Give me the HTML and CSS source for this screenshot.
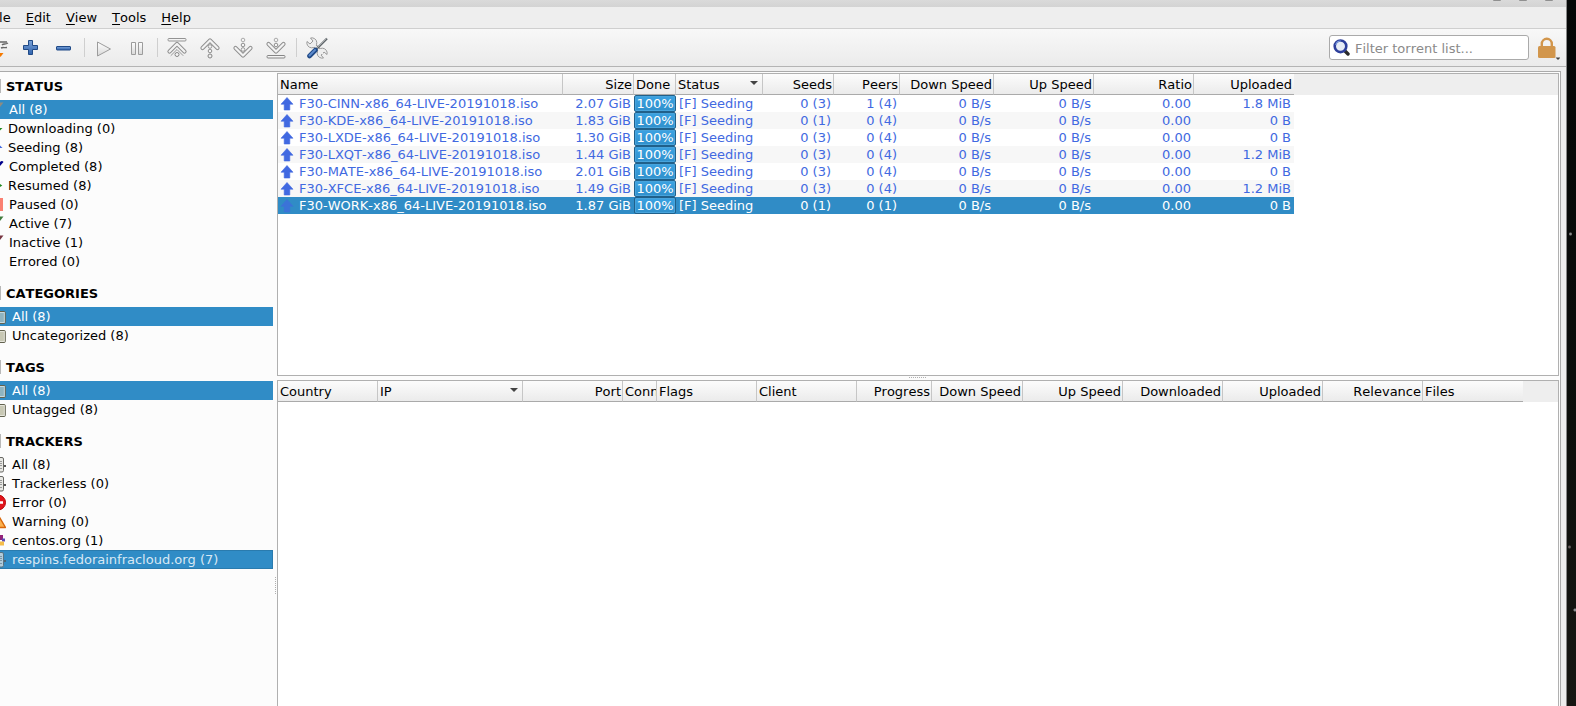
FILE: index.html
```html
<!DOCTYPE html>
<html lang="en">
<head>
    <meta charset="UTF-8">
    <meta name="viewport" content="width=device-width, initial-scale=1.0">
    <title>Torrents</title>
    <link rel="stylesheet" href="styles.css">
</head>
<body>
    <svg class="defs" width="0" height="0">
        <defs>
            <linearGradient id="blue" x1="0" y1="0" x2="0" y2="1">
                <stop offset="0" stop-color="#7ba3d8"/>
                <stop offset="1" stop-color="#2f62ad"/>
            </linearGradient>
            <linearGradient id="grey" x1="0" y1="0" x2="0" y2="1">
                <stop offset="0" stop-color="#ffffff"/>
                <stop offset="1" stop-color="#d8d8d8"/>
            </linearGradient>
            <symbol id="arrow-up" viewBox="0 0 14 14">
                <path d="M7 .5 13 7.2H9.8V13H4.2V7.2H1z" fill="#4169e1" stroke="#4169e1" stroke-width=".6" stroke-linejoin="round"/>
            </symbol>
            <symbol id="chevron" viewBox="0 0 22 14">
                <path d="M3.500 11 11 3.500 18.500 11" fill="none" stroke="#8f8f8f" stroke-width="4.200" stroke-linecap="round" stroke-linejoin="round"/>
                <path d="M3.500 11 11 3.500 18.500 11" fill="none" stroke="#f3f3f3" stroke-width="2.200" stroke-linecap="round" stroke-linejoin="round"/>
            </symbol>
            <symbol id="box" viewBox="0 0 16 16">
                <rect x="1" y="2.500" width="14.300" height="12" rx="1" fill="currentColor" stroke="#62624f"/>
                <rect x="2" y="3.500" width="12.300" height="10" fill="none" stroke="#fff" stroke-opacity=".5"/>
            </symbol>
            <symbol id="server" viewBox="0 0 16 16">
                <rect x="3.500" y=".5" width="10" height="14.500" rx="1.500" fill="#e8e8e4" stroke="#686864"/>
                <path d="M6 4.500h6M6 6.500h6M6 8.500h6M6 11.500h6" stroke="#999"/>
                <path d="M14 9h2" stroke="#555" stroke-width="2"/>
            </symbol>
        </defs>
    </svg>

    <div class="desktop">
        <div class="window">
            <div class="titlebar"><i></i><i></i><i></i></div>

            <div class="menubar">
                <span><u>F</u>ile</span>
                <span><u>E</u>dit</span>
                <span><u>V</u>iew</span>
                <span><u>T</u>ools</span>
                <span><u>H</u>elp</span>
            </div>

            <div class="toolbar">
                <span class="tool"><svg width="22" height="22" viewBox="0 0 22 22"><path d="M12 5h8M15 8c2-2 3 0 6-2M14 11c2-1 3 0 6-.500" fill="none" stroke="#666" stroke-width="1.400"/><path d="M11 16h5.500l-3 4z" fill="#f57900"/></svg></span>
                <span class="tool"><svg width="22" height="22" viewBox="0 0 22 22"><path d="M8.500 3.500h4v5h5v4h-5v5h-4v-5h-5v-4h5z" fill="url(#blue)" stroke="#204a87" stroke-linejoin="round"/></svg></span>
                <span class="tool"><svg width="22" height="22" viewBox="0 0 22 22"><rect x="3.500" y="9.500" width="14" height="3.500" rx=".5" fill="url(#blue)" stroke="#204a87"/></svg></span>
                <i class="sep"></i>
                <span class="tool"><svg width="22" height="22" viewBox="0 0 22 22"><path d="M4.500 5v14L17.500 12z" fill="url(#grey)" stroke="#9c9c9c" stroke-linejoin="round"/></svg></span>
                <span class="tool"><svg width="22" height="22" viewBox="0 0 22 22"><path d="M5.500 5.500h4v12h-4zM12.500 5.500h4v12h-4z" fill="url(#grey)" stroke="#9c9c9c"/></svg></span>
                <i class="sep"></i>
                <span class="tool"><svg width="22" height="22" viewBox="0 0 22 22"><rect x="2" y="1.500" width="18" height="2.500" rx="1" fill="#f4f4f4" stroke="#939393"/><use href="#chevron" x="0" y="3.500" width="22" height="14"/><path d="M5 18.500 11 12.500 17 18.500" fill="none" stroke="#999" stroke-linecap="round"/><circle cx="11" cy="17.500" r="2" fill="#f4f4f4" stroke="#858585"/></svg></span>
                <span class="tool"><svg width="22" height="22" viewBox="0 0 22 22"><use href="#chevron" x="0" y="0" width="22" height="14"/><circle cx="11" cy="9.500" r="1.800" fill="#f4f4f4" stroke="#999"/><circle cx="11" cy="14" r="1.800" fill="#f4f4f4" stroke="#8f8f8f"/><circle cx="11" cy="19" r="2" fill="#eee" stroke="#858585"/></svg></span>
                <span class="tool"><svg width="22" height="22" viewBox="0 0 22 22"><g transform="matrix(1 0 0 -1 0 22)"><use href="#chevron" x="0" y="0" width="22" height="14"/><circle cx="11" cy="9.500" r="1.800" fill="#f4f4f4" stroke="#999"/><circle cx="11" cy="14" r="1.800" fill="#f4f4f4" stroke="#8f8f8f"/><circle cx="11" cy="19" r="1.800" fill="#f4f4f4" stroke="#aaa"/></g></svg></span>
                <span class="tool"><svg width="22" height="22" viewBox="0 0 22 22"><g transform="matrix(1 0 0 -1 0 22)"><rect x="2" y="1" width="18" height="2.500" rx="1" fill="#f4f4f4" stroke="#858585"/><use href="#chevron" x="0" y="4" width="22" height="14"/><circle cx="11" cy="14" r="1.800" fill="#f4f4f4" stroke="#8f8f8f"/><circle cx="11" cy="19" r="1.800" fill="#f4f4f4" stroke="#aaa"/></g></svg></span>
                <i class="sep wide"></i>
                <span class="tool"><svg width="22" height="22" viewBox="0 0 22 22">
                    <path d="M6 6 17 17" stroke="#888" stroke-width="4"/>
                    <path d="M1 4.500 4 7 7 4 4.500 1A5 5 0 1 1 1 4.500zM21 17.500 18 15 15 18 17.500 21A5 5 0 1 1 21 17.500z" fill="#eee" stroke="#999"/>
                    <path d="M6 6 17 17" stroke="#eee" stroke-width="2.200"/>
                    <path d="M21 1.500 11 11.500" stroke="#5e6468" stroke-width="2.200"/>
                    <path d="M20.500 1.500 11 11" stroke="#b5b9bb" stroke-width=".8"/>
                    <path d="M9.500 13 3.500 19" stroke="#204a87" stroke-width="4.600" stroke-linecap="round"/>
                    <path d="M9 13 3.500 18.500" stroke="#5c8acb" stroke-width="2" stroke-linecap="round"/>
                </svg></span>
                <div class="search">
                    <svg width="17" height="17" viewBox="0 0 17 17"><path d="M12 12 15 15" stroke="#2a2a2a" stroke-width="3.400" stroke-linecap="round"/><circle cx="7.500" cy="7.300" r="5.800" fill="#e6ecf6" stroke="#2d3f9b" stroke-width="2.600"/><path d="M2.800 6a5 5 0 0 1 5-4" fill="none" stroke="#7d9de0" stroke-width="1.200"/></svg>
                    <span>Filter torrent list...</span>
                </div>
                <svg class="lock" width="24" height="24" viewBox="0 0 24 24"><path d="M5.800 11V7.800a5 5 0 0 1 10 0V11" fill="none" stroke="#d2964c" stroke-width="2.400"/><rect x="2" y="10" width="17.500" height="12" rx="1.500" fill="#d2964c"/><path d="M19.500 21.500h5l-2.500 2.500z" fill="#444"/></svg>
            </div>

            <div class="main">
                <div class="sidebar">
                    <h3>STATUS</h3>
                    <ul class="status">
                        <li class="selected"><svg viewBox="0 0 9 19"><path d="M0 2.500h3.500L0 7z" fill="#8e8b80"/></svg>All (8)</li>
                        <li class="near"><svg viewBox="0 0 8 19"><path d="M0 9h2.500L0 11.500z" fill="#228b22"/></svg>Downloading (0)</li>
                        <li class="near"><svg viewBox="0 0 8 19"><path d="M0 7.500 2.500 10H0z" fill="#4169e1"/></svg>Seeding (8)</li>
                        <li><svg viewBox="0 0 9 19"><path d="M0 5q2-2 3.500 0L0 9z" fill="#00008b"/></svg>Completed (8)</li>
                        <li class="near"><svg viewBox="0 0 8 19"><path d="M0 8 2.300 9.500 0 11z" fill="#228b22"/></svg>Resumed (8)</li>
                        <li><svg viewBox="0 0 9 19"><path d="M0 3h3v13H0z" fill="#fa8072"/></svg>Paused (0)</li>
                        <li><svg viewBox="0 0 9 19"><path d="M0 2.500h3.500L0 7z" fill="#3f7a3c"/></svg>Active (7)</li>
                        <li><svg viewBox="0 0 9 19"><path d="M0 2.500h3.500L0 7z" fill="#773440"/></svg>Inactive (1)</li>
                        <li><svg viewBox="0 0 9 19"></svg>Errored (0)</li>
                    </ul>
                    <h3>CATEGORIES</h3>
                    <ul>
                        <li class="selected"><svg class="box-blue"><use href="#box"/></svg>All (8)</li>
                        <li><svg class="box-tan"><use href="#box"/></svg>Uncategorized (8)</li>
                    </ul>
                    <h3>TAGS</h3>
                    <ul>
                        <li class="selected"><svg class="box-blue"><use href="#box"/></svg>All (8)</li>
                        <li><svg class="box-tan"><use href="#box"/></svg>Untagged (8)</li>
                    </ul>
                    <h3>TRACKERS</h3>
                    <ul>
                        <li><svg><use href="#server"/></svg>All (8)</li>
                        <li><svg><use href="#server"/></svg>Trackerless (0)</li>
                        <li><svg viewBox="0 0 16 16"><circle cx="8" cy="7.500" r="7.500" fill="#e0151c" stroke="#b00"/><path d="M4 7.500h9" stroke="#fff" stroke-width="2.500"/></svg>Error (0)</li>
                        <li><svg viewBox="0 0 16 16"><path d="M8.500 1.500 15.500 13.500H1.500z" fill="#fbb04e" stroke="#d8660b" stroke-width="1.400" stroke-linejoin="round"/></svg>Warning (0)</li>
                        <li><svg viewBox="0 0 16 16"><path d="M8 2h5v5H8z" fill="#932279"/><path d="M12 5.500h3v3H12z" fill="#5b4bb5"/><path d="M9 8.500h5v4H9z" fill="#f5bd4a"/></svg>centos.org (1)</li>
                        <li class="selected focused"><svg><use href="#server"/></svg>respins.fedorainfracloud.org (7)</li>
                    </ul>
                    <i class="grip"></i>
                </div>

                <div class="panes">
                    <div class="pane torrents">
                        <div class="header">
                            <b>Name</b><b class="num">Size</b><b>Done</b><b class="sorted">Status</b><b class="num">Seeds</b><b class="num">Peers</b><b class="num">Down Speed</b><b class="num">Up Speed</b><b class="num">Ratio</b><b class="num">Uploaded</b>
                        </div>
                        <div id="torrent-rows"></div>
                    </div>
                    <div class="splitter"><i></i></div>
                    <div class="pane peers">
                        <div class="header">
                            <b>Country</b><b class="sorted">IP</b><b class="num">Port</b><b>Conn</b><b>Flags</b><b>Client</b><b class="num">Progress</b><b class="num">Down Speed</b><b class="num">Up Speed</b><b class="num">Downloaded</b><b class="num">Uploaded</b><b class="num">Relevance</b><b>Files</b>
                        </div>
                    </div>
                </div>
            </div>
        </div>
    </div>

    <script>
        // name, size, seeds, peers, uploaded
        const torrents = [
            ['CINN', '2.07 GiB', '0 (3)', '1 (4)', '1.8 MiB'],
            ['KDE', '1.83 GiB', '0 (1)', '0 (4)', '0 B'],
            ['LXDE', '1.30 GiB', '0 (3)', '0 (4)', '0 B'],
            ['LXQT', '1.44 GiB', '0 (3)', '0 (4)', '1.2 MiB'],
            ['MATE', '2.01 GiB', '0 (3)', '0 (4)', '0 B'],
            ['XFCE', '1.49 GiB', '0 (3)', '0 (4)', '1.2 MiB'],
            ['WORK', '1.87 GiB', '0 (1)', '0 (1)', '0 B']
        ];

        // Fill the torrent list, last row is the selected one
        document.getElementById('torrent-rows').innerHTML = torrents.map(([name, size, seeds, peers, uploaded], i) => `
            <div class="row${i === torrents.length - 1 ? ' selected' : ''}">
                <span class="name"><svg width="14" height="14"><use href="#arrow-up"/></svg>F30-${name}-x86_64-LIVE-20191018.iso</span>
                <span class="num">${size}</span>
                <span class="progress">100%</span>
                <span>[F] Seeding</span>
                <span class="num">${seeds}</span>
                <span class="num">${peers}</span>
                <span class="num">0 B/s</span>
                <span class="num">0 B/s</span>
                <span class="num">0.00</span>
                <span class="num">${uploaded}</span>
            </div>`).join('');
    </script>
</body>
</html>
```
FILE: styles.css
```css
* {
    box-sizing: border-box;
}
body {
    margin: 0;
    font-family: "DejaVu Sans", sans-serif;
    font-size: 13px;
    font-kerning: none;
    color: #000;
    overflow: hidden;
}
.defs {
    display: block;
}
.desktop {
    height: 706px;
    padding-right: 9px;
    background: radial-gradient(circle at 1570.5px 234px, #999 0, #777 1px, transparent 2px),
        radial-gradient(circle at 1569.5px 547px, #866 0, #555 1px, transparent 2px),
        radial-gradient(circle at 1575px 610px, #99a 0, #888 1px, transparent 2px), linear-gradient(#040606, #0c0e0b 60%, #171713);
}
.window {
    height: 706px;
    display: flex;
    flex-direction: column;
    background: #eee;
    border-right: 1px solid #888;
}
.titlebar {
    height: 7px;
    flex: none;
    display: flex;
    justify-content: flex-end;
    gap: 18px;
    padding-right: 13px;
    background: linear-gradient(#dadada, #d3d3d3);
}
.titlebar i {
    width: 8px;
    height: 1px;
    background: #909090;
    border-radius: 0 0 4px 4px;
}
.menubar {
    height: 22px;
    flex: none;
    display: flex;
    gap: 15px;
    margin-left: -12px;
    line-height: 21px;
    border-bottom: 1px solid #cfcfcf;
}
.menubar u {
    text-underline-offset: 2px;
}
.toolbar {
    height: 38px;
    flex: none;
    display: flex;
    align-items: center;
    padding-right: 6px;
    background: linear-gradient(#f8f8f8, #ebebeb);
    border-bottom: 1px solid #b4b4b4;
}
.tool {
    width: 33px;
    height: 22px;
    display: flex;
    justify-content: center;
}
.tool:first-child {
    margin-left: -19px;
}
.sep {
    width: 1px;
    height: 19px;
    margin: 0 2px 0 4px;
    background: #cfcfcf;
}
.sep.wide {
    margin: 0 3px 0 4px;
}
.search {
    width: 200px;
    height: 25px;
    margin-left: auto;
    display: flex;
    align-items: center;
    gap: 5px;
    padding-left: 3px;
    background: #fff;
    border: 1px solid #aaa;
    border-radius: 3px;
    color: #8a8a8a;
}
.search span {
    padding-top: 1px;
}
.lock {
    margin-left: 7px;
}
.main {
    flex: 1;
    display: flex;
    min-height: 0;
    margin: 4px 5px 0 0;
    border-top: 1px solid #aaa;
    border-right: 1px solid #aaa;
    background: #fcfcfc;
}
.sidebar {
    width: 277px;
    flex: none;
    position: relative;
    padding-right: 4px;
}
.sidebar h3 {
    height: 36px;
    margin: 0;
    padding: 14px 0 0 6px;
    font-size: 13px;
    line-height: 17px;
    background: linear-gradient(#b8b8b8, #b8b8b8) 0 15px / 1px 14px no-repeat;
}
.sidebar h3:first-child {
    height: 28px;
    padding-top: 6px;
    background-position: 0 7px;
}
.sidebar ul {
    list-style: none;
    margin: 0;
    padding: 0;
}
.sidebar li {
    height: 19px;
    display: flex;
    align-items: center;
    line-height: 19px;
    white-space: nowrap;
}
.sidebar li svg {
    width: 16px;
    height: 16px;
    margin-left: -10px;
    margin-right: 6px;
    flex: none;
}
.sidebar .status li svg {
    width: 9px;
    height: 19px;
    margin: 0;
}
.sidebar .status .near svg {
    width: 8px;
}
.box-blue {
    color: #8fb4c0;
}
.box-tan {
    color: #c8c8b4;
}
.sidebar li.selected {
    background: #308cc6;
    color: #fff;
}
.sidebar li.focused {
    color: #d8e8f4;
    border: 1px solid #2a7bae;
    border-left: 0;
}
.focused svg {
    opacity: .7;
}
.grip {
    position: absolute;
    right: 1px;
    top: 505px;
    height: 17px;
    border-left: 1px dotted #b0b0b0;
}
.panes {
    flex: 1;
    min-width: 0;
    display: flex;
    flex-direction: column;
    padding: 1px 1px 0 0;
}
.pane {
    border: 1px solid #b0b0b0;
    background: #fff;
}
.torrents {
    height: 303px;
}
.peers {
    flex: 1;
    border-bottom: 0;
}
.splitter {
    height: 4px;
    display: flex;
    align-items: center;
    justify-content: center;
}
.splitter i {
    width: 17px;
    margin-right: 1px;
    margin-top: -1px;
    border-top: 1px dotted #b0b0b0;
}
.header,
.row {
    display: grid;
}
.torrents .header,
.row {
    grid-template-columns: 285px 71px 42px 87px 71px 66px 94px 100px 100px 100px;
}
.peers .header {
    grid-template-columns: 100px 145px 100px 34px 100px 100px 75px 91px 100px 100px 100px 100px 100px;
}
.header {
    height: 21px;
    background: #eee;
}
.header b {
    font-weight: normal;
    line-height: 21px;
    height: 21px;
    padding: 0 1px 0 2px;
    overflow: hidden;
    white-space: nowrap;
    background: linear-gradient(#fcfcfc, #ebebeb);
    border-right: 1px solid #c6c6c6;
    border-bottom: 1px solid #aaa;
}
.header b:last-child {
    border-right: 0;
    padding-right: 2px;
}
.header .sorted {
    display: flex;
    justify-content: space-between;
    align-items: center;
    padding-right: 4px;
}
.sorted::after {
    content: "";
    border: 4px solid transparent;
    border-top-color: #444;
    border-bottom: 0;
    margin-top: -3px;
}
.header .num,
.row .num {
    text-align: right;
}
.row {
    width: 1016px;
    height: 17px;
    line-height: 17px;
    color: #4169e1;
    white-space: nowrap;
}
.row:nth-child(even) {
    background: #f7f7f7;
}
.row span {
    padding: 0 3px;
}
.row .name {
    display: flex;
    align-items: center;
    gap: 5px;
    padding-left: 2px;
}
.row.selected {
    background: #308cc6;
    color: #fff;
}
.row.selected svg {
    opacity: .7;
}
.row .progress {
    padding: 0;
    text-align: center;
    line-height: 15px;
    color: #fff;
    background: linear-gradient(#3ba2e2, #3090cc);
    border: 1px solid #20608a;
    border-radius: 2px;
    box-shadow: inset 0 0 0 1px #48a4dc;
}
```
